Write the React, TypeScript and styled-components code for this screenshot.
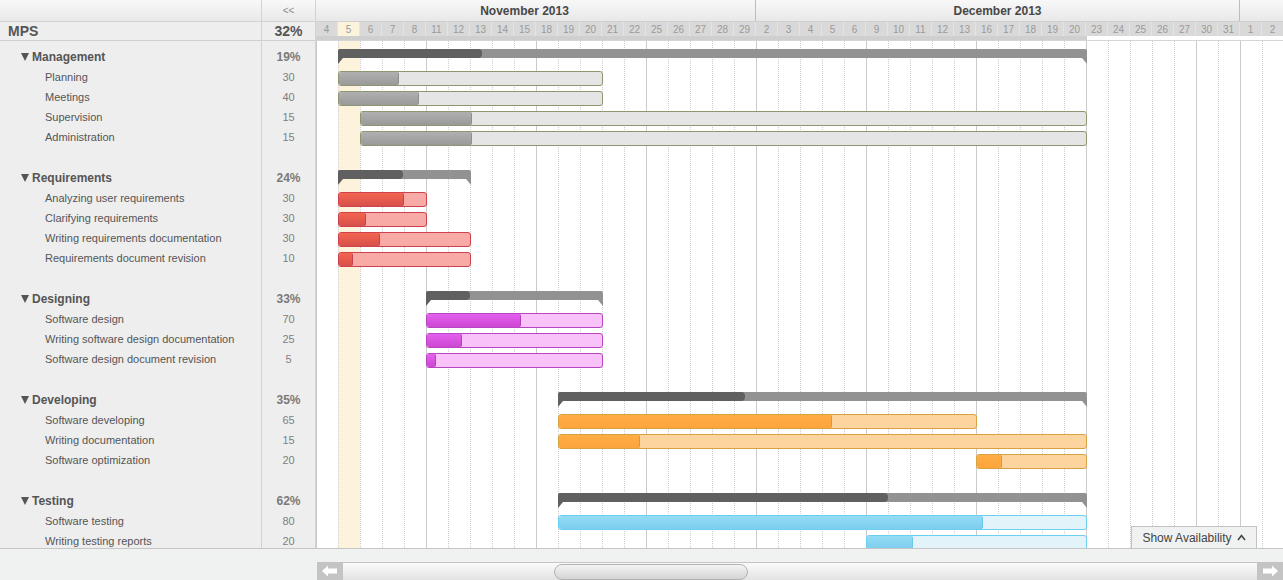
import styled, { createGlobalStyle } from "styled-components";

const GlobalStyle = createGlobalStyle`
  html, body {
    margin: 0;
    padding: 0;
    background: #ffffff;
  }
  body {
    font-family: "Liberation Sans", Arial, sans-serif;
  }
`;

const COL = 22;

const days = [
  4, 5, 6, 7, 8, 11, 12, 13, 14, 15, 18, 19, 20, 21, 22, 25, 26, 27, 28, 29,
  2, 3, 4, 5, 6, 9, 10, 11, 12, 13, 16, 17, 18, 19, 20, 23, 24, 25, 26, 27, 30, 31,
  1, 2,
];
const solidCols = new Set([0, 5, 10, 15, 20, 25, 30, 35, 40, 42]);
const TODAY = 1;

// November starts one (scrolled-away) day before the first visible column
const months = [
  { label: "November 2013", cols: 21 },
  { label: "December 2013", cols: 22 },
  { label: "", cols: 2 },
];

type Palette = { border: string; bg: string; top: string; bottom: string; edge: string };

const palettes: Record<string, Palette> = {
  gray: { border: "#8c9670", bg: "#e5e5e5", top: "#b0b0b0", bottom: "#999999", edge: "#8e8e8e" },
  red: { border: "#cf414c", bg: "#f8aba6", top: "#f4654f", bottom: "#d6504c", edge: "#c4404a" },
  magenta: { border: "#b845c2", bg: "#f9c2f9", top: "#e460ef", bottom: "#cc48d2", edge: "#b040b8" },
  orange: { border: "#d6a242", bg: "#fed49e", top: "#ffad44", bottom: "#fca53d", edge: "#d09a3a" },
  blue: { border: "#6ccff0", bg: "#e2f4fa", top: "#94dcf4", bottom: "#7ccdee", edge: "#6cc7ea" },
};

interface Task {
  name: string;
  value: number;
  start: number;
  span: number;
  progress: number;
}

interface Group {
  name: string;
  pct: string;
  color: string;
  start: number;
  span: number;
  progress: number;
  tasks: Task[];
}

const groups: Group[] = [
  {
    name: "Management", pct: "19%", color: "gray", start: 1, span: 34, progress: 144,
    tasks: [
      { name: "Planning", value: 30, start: 1, span: 12, progress: 60 },
      { name: "Meetings", value: 40, start: 1, span: 12, progress: 80 },
      { name: "Supervision", value: 15, start: 2, span: 33, progress: 111 },
      { name: "Administration", value: 15, start: 2, span: 33, progress: 111 },
    ],
  },
  {
    name: "Requirements", pct: "24%", color: "red", start: 1, span: 6, progress: 65,
    tasks: [
      { name: "Analyzing user requirements", value: 30, start: 1, span: 4, progress: 65 },
      { name: "Clarifying requirements", value: 30, start: 1, span: 4, progress: 27 },
      { name: "Writing requirements documentation", value: 30, start: 1, span: 6, progress: 41 },
      { name: "Requirements document revision", value: 10, start: 1, span: 6, progress: 14 },
    ],
  },
  {
    name: "Designing", pct: "33%", color: "magenta", start: 5, span: 8, progress: 44,
    tasks: [
      { name: "Software design", value: 70, start: 5, span: 8, progress: 94 },
      { name: "Writing software design documentation", value: 25, start: 5, span: 8, progress: 35 },
      { name: "Software design document revision", value: 5, start: 5, span: 8, progress: 9 },
    ],
  },
  {
    name: "Developing", pct: "35%", color: "orange", start: 11, span: 24, progress: 187,
    tasks: [
      { name: "Software developing", value: 65, start: 11, span: 19, progress: 273 },
      { name: "Writing documentation", value: 15, start: 11, span: 24, progress: 81 },
      { name: "Software optimization", value: 20, start: 30, span: 5, progress: 25 },
    ],
  },
  {
    name: "Testing", pct: "62%", color: "blue", start: 11, span: 24, progress: 330,
    tasks: [
      { name: "Software testing", value: 80, start: 11, span: 24, progress: 424 },
      { name: "Writing testing reports", value: 20, start: 25, span: 10, progress: 46 },
    ],
  },
];

/* ---------- layout ---------- */

const Page = styled.div`
  width: 1283px;
  height: 580px;
  display: flex;
  flex-direction: column;
  overflow: hidden;
  background: #ffffff;
`;

const Main = styled.div`
  display: flex;
  flex: 0 0 548px;
  overflow: hidden;
`;

/* ---------- left panel ---------- */

const LeftPanel = styled.div`
  display: flex;
  flex: 0 0 316px;
  background: #eeeeee;
  overflow: hidden;
  position: relative;
  z-index: 1;
`;

const LeftColumn = styled.div<{ $width: number }>`
  box-sizing: border-box;
  width: ${p => p.$width}px;
  flex: 0 0 ${p => p.$width}px;
  border-right: 1px solid #d2d2d2;
  display: flex;
  flex-direction: column;
`;

const TopCell = styled.div`
  flex: 0 0 21px;
  border-bottom: 1px solid #d2d2d2;
  background: linear-gradient(#f8f8f8, #e9e9e9);
  display: flex;
  align-items: center;
  justify-content: center;
  font-size: 10px;
  color: #8a8a8a;
`;

const TitleCell = styled.div<{ $align?: string }>`
  flex: 0 0 18px;
  border-bottom: 1px solid #cfcfcf;
  display: flex;
  align-items: center;
  justify-content: ${p => p.$align || "flex-start"};
  padding: 0 8px;
  font-size: 14px;
  font-weight: bold;
  color: #555555;
`;

const LeftBody = styled.div`
  flex-shrink: 0;
  padding-top: 5px;
  display: flex;
  flex-direction: column;
`;

const GroupName = styled.div`
  height: 21px;
  display: flex;
  align-items: center;
  padding-left: 21px;
  gap: 3px;
  font-size: 12px;
  font-weight: bold;
  color: #555555;
`;

const Caret = styled.span`
  width: 0;
  height: 0;
  border-left: 4.5px solid transparent;
  border-right: 4.5px solid transparent;
  border-top: 8px solid #555555;
`;

const TaskName = styled.div`
  height: 20px;
  display: flex;
  align-items: center;
  padding-left: 45px;
  font-size: 11px;
  color: #555555;
  white-space: nowrap;
`;

const GroupPct = styled.div`
  height: 21px;
  display: flex;
  align-items: center;
  justify-content: center;
  font-size: 12px;
  font-weight: bold;
  color: #7a7a7a;
`;

const TaskValue = styled.div`
  height: 20px;
  display: flex;
  align-items: center;
  justify-content: center;
  font-size: 11px;
  color: #808080;
`;

const Spacer = styled.div`
  height: 20px;
`;

/* ---------- chart ---------- */

const Chart = styled.div`
  flex: 1;
  min-width: 0;
  display: flex;
  flex-direction: column;
  overflow: hidden;
`;

const MonthRow = styled.div`
  display: flex;
  flex: 0 0 21px;
  margin-left: -${COL}px;
  border-bottom: 1px solid #d0d0d0;
  background: linear-gradient(#f8f8f8, #e8e8e8);
`;

const MonthCell = styled.div<{ $cols: number }>`
  flex: 0 0 ${p => p.$cols * COL}px;
  box-sizing: border-box;
  border-right: 1px solid #bdbdbd;
  display: flex;
  align-items: center;
  justify-content: center;
  font-size: 12px;
  font-weight: bold;
  color: #474747;
`;

const DateRow = styled.div`
  display: flex;
  flex: 0 0 14px;
  background: #d9d9d9;
`;

const DateCell = styled.div<{ $today?: boolean }>`
  flex: 0 0 ${COL}px;
  box-sizing: border-box;
  border-right: 1px solid #e4e4e4;
  background: ${p => (p.$today ? "#fcf3dc" : "transparent")};
  display: flex;
  align-items: center;
  justify-content: center;
  font-size: 10px;
  color: #9a9a9a;
`;

const BandRow = styled.div`
  flex: 0 0 4px;
  border-bottom: 1px solid #d6d6d6;
`;

const Band = styled.div<{ $cols: number }>`
  width: ${p => p.$cols * COL + 1}px;
  height: 4px;
  background: #cfcfcf;
`;

const Body = styled.div`
  position: relative;
  flex: 1;
  min-height: 0;
  overflow: hidden;
`;

const GridLayer = styled.div`
  position: absolute;
  inset: 0;
  display: flex;
`;

const GridCol = styled.div<{ $solid: boolean; $today: boolean }>`
  flex: 0 0 ${COL}px;
  box-sizing: border-box;
  border-left: 1px ${p => (p.$solid ? "solid #cbcbcb" : "dotted #cfcfcf")};
  background: ${p => (p.$today ? "#fdf3dc" : "transparent")};
`;

const Rows = styled.div`
  position: relative;
  padding-top: 5px;
  display: flex;
  flex-direction: column;
`;

const BarRow = styled.div<{ $h: number }>`
  position: relative;
  height: ${p => p.$h}px;
`;

const SummaryBar = styled.div<{ $done: boolean }>`
  position: absolute;
  top: 3px;
  height: 9px;
  background: #929292;
  border-radius: 2px 2px 0 0;

  &::before,
  &::after {
    content: "";
    position: absolute;
    top: 9px;
    width: 0;
    height: 0;
    border-top: 6px solid #929292;
  }
  &::before {
    left: 0;
    border-top-color: #606060;
    border-right: 5px solid transparent;
  }
  &::after {
    right: 0;
    border-top-color: ${p => (p.$done ? "#606060" : "#929292")};
    border-left: 5px solid transparent;
  }
`;

const SummaryDone = styled.div`
  height: 100%;
  background: #606060;
  border-radius: 2px 4px 4px 0;
`;

const TaskBar = styled.div<{ $c: Palette }>`
  position: absolute;
  top: 4px;
  height: 15px;
  box-sizing: border-box;
  border: 1px solid ${p => p.$c.border};
  border-radius: 3px;
  background: ${p => p.$c.bg};
  overflow: hidden;
`;

const TaskDone = styled.div<{ $c: Palette }>`
  height: 100%;
  box-sizing: border-box;
  border-right: 1px solid ${p => p.$c.edge};
  border-radius: 2px;
  background: linear-gradient(${p => p.$c.top}, ${p => p.$c.bottom});
`;

const AvailabilityTab = styled.div`
  position: absolute;
  right: 26px;
  bottom: 0;
  width: 126px;
  height: 22px;
  box-sizing: border-box;
  border: 1px solid #c2c2c2;
  border-bottom: none;
  background: #f0f1f1;
  display: flex;
  align-items: center;
  justify-content: center;
  gap: 5px;
  font-size: 12px;
  color: #444444;
  z-index: 2;
`;

/* ---------- footer ---------- */

const Footer = styled.div`
  flex: 1;
  border-top: 1px solid #c6c6c6;
  background: #f0f1f1;
  display: flex;
  align-items: flex-end;
  padding-left: 317px;
`;

const Scrollbar = styled.div`
  flex: 1;
  height: 18px;
  display: flex;
`;

const ArrowButton = styled.div`
  flex: 0 0 26px;
  height: 18px;
  background: #c4c4c4;
  display: flex;
  align-items: center;
  justify-content: center;
`;

const Track = styled.div`
  flex: 1;
  box-sizing: border-box;
  border-top: 1px solid #c4c4c4;
  background: linear-gradient(#fbfbfb, #e2e2e2);
  display: flex;
  align-items: center;
`;

const Thumb = styled.div`
  margin-left: 211px;
  width: 194px;
  height: 16px;
  box-sizing: border-box;
  border: 1px solid #b2b2b2;
  border-radius: 8px;
  background: linear-gradient(#f4f4f4, #d4d4d4);
`;

function Arrow({ dir }: { dir: "left" | "right" }) {
  return (
    <svg width="18" height="12" viewBox="0 0 18 12">
      <path
        d="M1 6 L7 0.5 L7 3.5 L16 3.5 L16 8.5 L7 8.5 L7 11.5 Z"
        fill="#ffffff"
        transform={dir === "right" ? "translate(18 0) scale(-1 1)" : undefined}
      />
    </svg>
  );
}

function App() {
  return (
    <Page>
      <GlobalStyle />
      <Main>
        <LeftPanel>
          <LeftColumn $width={262}>
            <TopCell />
            <TitleCell>MPS</TitleCell>
            <LeftBody>
              {groups.map(g => (
                <div key={g.name}>
                  <GroupName>
                    <Caret />
                    {g.name}
                  </GroupName>
                  {g.tasks.map(t => (
                    <TaskName key={t.name}>{t.name}</TaskName>
                  ))}
                  <Spacer />
                </div>
              ))}
            </LeftBody>
          </LeftColumn>
          <LeftColumn $width={54}>
            <TopCell>&lt;&lt;</TopCell>
            <TitleCell $align="center">32%</TitleCell>
            <LeftBody>
              {groups.map(g => (
                <div key={g.name}>
                  <GroupPct>{g.pct}</GroupPct>
                  {g.tasks.map(t => (
                    <TaskValue key={t.name}>{t.value}</TaskValue>
                  ))}
                  <Spacer />
                </div>
              ))}
            </LeftBody>
          </LeftColumn>
        </LeftPanel>

        <Chart>
          <MonthRow>
            {months.map((m, i) => (
              <MonthCell key={i} $cols={m.cols}>{m.label}</MonthCell>
            ))}
          </MonthRow>
          <DateRow>
            {days.map((d, i) => (
              <DateCell key={i} $today={i === TODAY}>{d}</DateCell>
            ))}
          </DateRow>
          <BandRow>
            <Band $cols={35} />
          </BandRow>
          <Body>
            <GridLayer>
              {days.map((_, i) => (
                <GridCol key={i} $solid={solidCols.has(i)} $today={i === TODAY} />
              ))}
            </GridLayer>
            <Rows>
              {groups.map(g => {
                const c = palettes[g.color];
                return (
                  <div key={g.name}>
                    <BarRow $h={21}>
                      <SummaryBar
                        $done={g.progress >= g.span * COL}
                        style={{ left: g.start * COL, width: g.span * COL + 1 }}
                      >
                        <SummaryDone style={{ width: g.progress }} />
                      </SummaryBar>
                    </BarRow>
                    {g.tasks.map(t => (
                      <BarRow key={t.name} $h={20}>
                        <TaskBar $c={c} style={{ left: t.start * COL, width: t.span * COL + 1 }}>
                          <TaskDone $c={c} style={{ width: t.progress }} />
                        </TaskBar>
                      </BarRow>
                    ))}
                    <Spacer />
                  </div>
                );
              })}
            </Rows>
            <AvailabilityTab>
              Show Availability
              <svg width="9" height="7" viewBox="0 0 9 7">
                <polyline points="1,6 4.5,1.5 8,6" fill="none" stroke="#444444" strokeWidth="1.6" />
              </svg>
            </AvailabilityTab>
          </Body>
        </Chart>
      </Main>

      <Footer>
        <Scrollbar>
          <ArrowButton>
            <Arrow dir="left" />
          </ArrowButton>
          <Track>
            <Thumb />
          </Track>
          <ArrowButton>
            <Arrow dir="right" />
          </ArrowButton>
        </Scrollbar>
      </Footer>
    </Page>
  );
}

export default App;
